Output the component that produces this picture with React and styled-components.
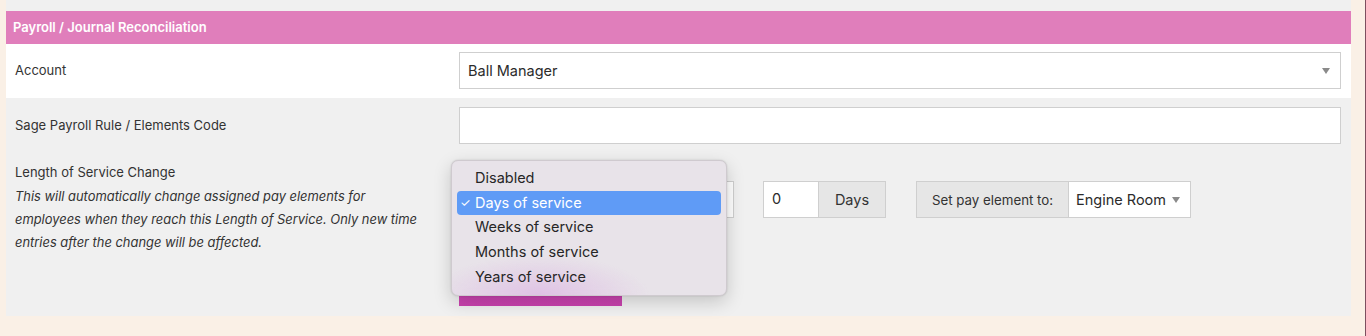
import styled, { createGlobalStyle } from 'styled-components'

const GlobalStyle = createGlobalStyle`
  html, body {
    margin: 0;
    background: #faf0e6;
  }
  body {
    font-family: Inter, "Open Sans", sans-serif;
    color: #333;
    border-right: 1px solid #7d4f5f;
    min-height: 336px;
    box-sizing: border-box;
  }
`

const Panel = styled.div`
  margin: 0 14px 0 6px;
  padding-top: 11px;
  padding-bottom: 10px;
  background: #f0f0f0;
`

const Header = styled.div`
  height: 33px;
  line-height: 33px;
  padding-left: 7px;
  background: #e07ebb;
  color: #fff;
  font-size: 13px;
  font-weight: 600;
`

const Row = styled.div`
  display: grid;
  grid-template-columns: 444px 1fr;
  align-items: ${p => (p.$top ? 'start' : 'center')};
  padding: ${p => p.$pad || '8px 10px 9px 9px'};
  background: ${p => (p.$white ? '#fff' : '#f0f0f0')};
`

const Label = styled.div`
  font-size: 13px;
  line-height: 23px;
  color: #333;
`

const Hint = styled.div`
  margin-top: 1px;
  font-style: italic;
  font-size: 12.9px;
  line-height: 23px;
  color: #333;
  white-space: nowrap;
`

const SelectBox = styled.div`
  position: relative;
  display: flex;
  align-items: center;
  box-sizing: border-box;
  width: ${p => p.$width || '100%'};
  height: 37px;
  padding: 0 10px 0 8px;
  background: #fff;
  border: 1px solid #cfcfcf;
  font-size: 14.5px;
  color: #2b2b2b;
`

const Arrow = styled.span`
  margin-left: auto;
  width: 0;
  height: 0;
  border-left: 4.5px solid transparent;
  border-right: 4.5px solid transparent;
  border-top: 6px solid #8a8a8a;
`

const TextInput = styled.div`
  box-sizing: border-box;
  height: 37px;
  background: #fff;
  border: 1px solid #cfcfcf;
`

const Controls = styled.div`
  display: flex;
  flex-direction: column;
  align-items: flex-start;
  margin-top: 20px;
`

const ControlLine = styled.div`
  display: flex;
  align-items: center;
  gap: 29px;
`

const Group = styled.div`
  display: flex;
  height: 37px;
  margin-left: ${p => p.$shift || '0'};
  border: 1px solid #cfcfcf;
  box-sizing: border-box;
`

const NumField = styled.div`
  width: 46px;
  padding-left: 8px;
  background: #fff;
  font-size: 14.5px;
  line-height: 34px;
  color: #2b2b2b;
`

const Addon = styled.div`
  display: flex;
  align-items: center;
  justify-content: center;
  width: ${p => p.$width};
  background: #e6e6e6;
  font-size: ${p => p.$size || '14.5px'};
  color: #333;
  border-${p => p.$side}: 1px solid #cfcfcf;
`

const GroupSelect = styled.div`
  display: flex;
  align-items: center;
  width: 121px;
  padding: 0 10px 0 7px;
  box-sizing: border-box;
  background: #fff;
  font-size: 14.5px;
  color: #2b2b2b;
`

const SaveButton = styled.div`
  margin-top: 52px;
  width: 163px;
  height: 36px;
  background: linear-gradient(180deg, #d34dbb, #c942ae);
`

const Menu = styled.div`
  position: absolute;
  left: -9px;
  top: -22px;
  width: 276px;
  box-sizing: border-box;
  padding: 5px 5px 6px;
  border-radius: 7px;
  border: 1px solid #cfcacf;
  background:
    radial-gradient(ellipse 110px 40px at 32% 100%, rgba(222, 190, 228, 0.9), rgba(222, 190, 228, 0) 100%),
    #e8e3e9;
  box-shadow: 0 6px 18px rgba(0, 0, 0, 0.18), 0 0 2px rgba(0, 0, 0, 0.15);
  font-family: Inter, "DejaVu Sans", sans-serif;
  z-index: 5;
`

const MenuItem = styled.div`
  position: relative;
  height: 24.7px;
  line-height: 24.7px;
  padding-left: 18px;
  border-radius: 4px;
  font-size: 14.5px;
  color: ${p => (p.$active ? '#fff' : '#262626')};
  background: ${p => (p.$active ? '#5f9bf6' : 'transparent')};
`

const Check = styled.span`
  position: absolute;
  left: 3px;
  top: 0;
  font-size: 12px;
`

const options = ['Disabled', 'Days of service', 'Weeks of service', 'Months of service', 'Years of service']

export default function App() {
  return (
    <>
      <GlobalStyle />
      <Panel>
        <Header>Payroll / Journal Reconciliation</Header>
        <Row $white $pad="8px 10px 9px 9px">
          <Label>Account</Label>
          <SelectBox>
            Ball Manager
            <Arrow />
          </SelectBox>
        </Row>
        <Row $pad="9px 10px 9px 9px">
          <Label>Sage Payroll Rule / Elements Code</Label>
          <TextInput />
        </Row>
        <Row $top $pad="8px 10px 0 9px">
          <div>
            <Label>Length of Service Change</Label>
            <Hint>
              This will automatically change assigned pay elements for
              <br />
              employees when they reach this Length of Service. Only new time
              <br />
              entries after the change will be affected.
            </Hint>
          </div>
          <Controls>
            <ControlLine>
              <SelectBox $width="275px">
                <Arrow />
                <Menu>
                  {options.map(o => (
                    <MenuItem key={o} $active={o === 'Days of service'}>
                      {o === 'Days of service' && <Check>✓</Check>}
                      {o}
                    </MenuItem>
                  ))}
                </Menu>
              </SelectBox>
              <Group>
                <NumField>0</NumField>
                <Addon $width="66px" $side="left">Days</Addon>
              </Group>
              <Group $shift="1px">
                <Addon $width="151px" $side="right" $size="13.3px">Set pay element to:</Addon>
                <GroupSelect>
                  Engine Room
                  <Arrow />
                </GroupSelect>
              </Group>
            </ControlLine>
            <SaveButton />
          </Controls>
        </Row>
      </Panel>
    </>
  )
}
